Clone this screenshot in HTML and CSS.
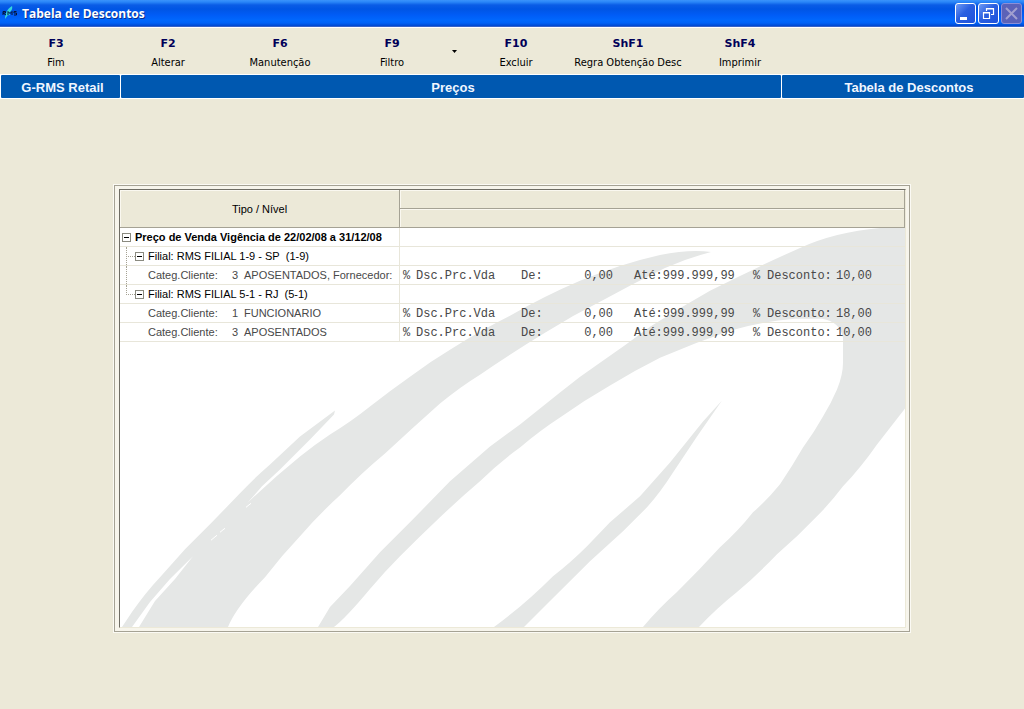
FILE: index.html
```html
<!DOCTYPE html>
<html lang="pt-BR">
<head>
<meta charset="utf-8">
<title>Tabela de Descontos</title>
<link rel="stylesheet" href="styles.css">
</head>
<body>
<header class="titlebar">
  <svg class="app-icon" viewBox="0 0 16 16" aria-hidden="true">
    <path d="M3 13C3 8 5 3 10 0C11 3 9 5 7 7C9 8 8 10 6 9C5 10 4 12 3 13Z" fill="#35d6dc"/>
    <path d="M1 9V5.500h2.500v1.500H1l3 2M6 9V5.500l2 2 2-2V9M14.500 5.500H12v1.500h2.500v2H12" fill="none" stroke="#04143a"/>
  </svg>
  <h1 class="title">Tabela de Descontos</h1>
  <div class="window-controls">
    <button class="win-btn" aria-label="Minimizar"><svg viewBox="0 0 19 19"><path d="M4 13h7v3H4z" fill="#fff"/></svg></button>
    <button class="win-btn" aria-label="Restaurar"><svg viewBox="0 0 19 19"><path d="M7.500 7V4.500h7v6H12M7 5h8M4.500 8.500h6v6h-6zM4 9h7" fill="none" stroke="#fff" stroke-width="1.200"/></svg></button>
    <button class="win-btn win-close" aria-label="Fechar" disabled><svg viewBox="0 0 19 19"><path d="M4 4l11 11M15 4L4 15" stroke="#a2a0cf" stroke-width="2"/></svg></button>
  </div>
</header>
<nav class="toolbar" aria-label="Comandos">
  <button class="tool"><b class="key">F3</b><span>Fim</span></button>
  <button class="tool"><b class="key">F2</b><span>Alterar</span></button>
  <button class="tool"><b class="key">F6</b><span>Manutenção</span></button>
  <button class="tool"><b class="key">F9</b><span>Filtro</span></button>
  <button class="tool-menu" aria-label="Opções de filtro"><svg viewBox="0 0 5 3"><path d="M0 0h5L2.500 3z"/></svg></button>
  <button class="tool"><b class="key">F10</b><span>Excluir</span></button>
  <button class="tool"><b class="key">ShF1</b><span>Regra Obtenção Desc</span></button>
  <button class="tool"><b class="key">ShF4</b><span>Imprimir</span></button>
</nav>
<div class="context">
  <div class="context-cell">G-RMS Retail</div>
  <div class="context-cell">Preços</div>
  <div class="context-cell screen-name">Tabela de Descontos</div>
</div>
<main class="workspace">
  <div class="frame">
    <div class="sheet">
      <svg class="watermark" viewBox="120 228 785 400" preserveAspectRatio="none" aria-hidden="true">
        <path d="M122 628L132 613Q145 594 160 578L185 550L210 525L240 494Q255 478 270 465L300 437L335 411L334 415L310 440L280 470L262 487L247 504Q273 479 300 457Q315 445 330 435Q350 423 370 407Q390 391 410 377Q430 362 450 350Q480 331 510 316Q545 296 580 281Q620 264 660 255Q690 249 711 252Q688 258 665 268Q632 284 600 302Q572 316 545 333Q512 353 480 375Q459 388 440 404Q412 429 385 454Q361 474 340 496Q319 515 300 537Q282 556 265 578Q236 608 228 628H139L155 602L175 580L193 557L170 580L150 603L132 628Z"/>
        <path d="M318 628L330 608L350 587L380 553L410 523L450 482L490 447L520 425L560 393Q579 377 600 363Q625 346 650 327Q680 308 710 291Q755 268 800 248Q835 232 880 228H905V409L877 445Q861 468 843 487Q831 503 817 517Q798 537 777 555Q757 576 737 593Q717 609 699 628H643Q659 609 677 593Q699 571 720 548Q738 532 753 513Q767 501 780 485Q792 467 803 448Q814 433 823 417Q831 404 837 390Q843 375 843 363V338Q840 322 822 319H795Q760 322 730 331Q695 343 660 358Q634 371 610 386Q584 401 560 418Q540 431 520 448Q499 463 480 482Q460 499 440 518Q419 538 400 557Q384 573 370 590Q345 620 334 628Z"/>
        <path d="M494 628Q524 606 553 577Q570 564 587 547L610 523L640 497L670 463L703 422L722 401L697 437L673 473Q661 492 647 508L623 532L590 562L550 602L524 628Z"/>
        <path class="fleck" d="M211 541l6-5M220 533l5-4M246 508l5-4"/>
      </svg>
      <table class="grid">
        <colgroup><col class="col-level"><col></colgroup>
        <thead>
          <tr><th rowspan="2" scope="col">Tipo / Nível</th><th></th></tr>
          <tr><th></th></tr>
        </thead>
        <tbody>
          <tr><td><div class="node root"><button class="expander" aria-label="Recolher" aria-expanded="true"></button>Preço de Venda Vigência de 22/02/08 a 31/12/08</div></td><td></td></tr>
          <tr><td><div class="node branch"><button class="expander" aria-label="Recolher" aria-expanded="true"></button>Filial: RMS FILIAL 1-9 - SP&nbsp; (1-9)</div></td><td></td></tr>
          <tr><td><div class="node leaf trunk"><span>Categ.Cliente:</span><span>3</span><span>APOSENTADOS, Fornecedor:</span></div></td>
            <td><div class="rule"><span>%</span><span>Dsc.Prc.Vda</span><span>De:</span><span class="num">0,00</span><span>Até:999.999,99</span><span>%</span><span>Desconto:</span><span class="num">10,00</span></div></td></tr>
          <tr><td><div class="node branch last"><button class="expander" aria-label="Recolher" aria-expanded="true"></button>Filial: RMS FILIAL 5-1 - RJ&nbsp; (5-1)</div></td><td></td></tr>
          <tr><td><div class="node leaf"><span>Categ.Cliente:</span><span>1</span><span>FUNCIONARIO</span></div></td>
            <td><div class="rule"><span>%</span><span>Dsc.Prc.Vda</span><span>De:</span><span class="num">0,00</span><span>Até:999.999,99</span><span>%</span><span>Desconto:</span><span class="num">18,00</span></div></td></tr>
          <tr><td><div class="node leaf"><span>Categ.Cliente:</span><span>3</span><span>APOSENTADOS</span></div></td>
            <td><div class="rule"><span>%</span><span>Dsc.Prc.Vda</span><span>De:</span><span class="num">0,00</span><span>Até:999.999,99</span><span>%</span><span>Desconto:</span><span class="num">10,00</span></div></td></tr>
        </tbody>
      </table>
    </div>
  </div>
</main>
</body>
</html>
```
FILE: styles.css
```css
* { box-sizing: border-box; }

body {
  margin: 0;
  min-height: 100vh;
  display: flex;
  flex-direction: column;
  background: #ece9d8;
  color: #000;
  font: 11px/19px "Liberation Sans", Arial, sans-serif;
}

button {
  margin: 0;
  padding: 0;
  border: 0;
  background: none;
  color: inherit;
  font: inherit;
}

svg { display: block; }

/* Title bar */
.titlebar {
  height: 27px;
  display: flex;
  align-items: center;
  gap: 4px;
  padding: 0 2px;
  background: linear-gradient(#3b93fb 0, #2a86f8 2px, #0a5ce6 5px, #0055e4 9px, #005cf6 15px, #0067fd 20px, #0062f6 23px, #0046cf 26px, #6d80c0 27px);
}
.app-icon { width: 16px; height: 16px; }
.title {
  flex: 1;
  margin: 0;
  color: #fff;
  font: bold 12px/20px "Open Sans", sans-serif;
  text-shadow: 1px 1px #0b2f8c;
}
.window-controls { display: flex; gap: 2px; }
.win-btn {
  width: 21px;
  height: 21px;
  border: 1px solid #fff;
  border-radius: 3px;
  background: linear-gradient(135deg, #6f9bf5, #2a5fe0 45%, #1e52dc);
}
.win-close { border-color: #8b8fd8; background: #5b62b8; }

/* Toolbar */
.toolbar {
  display: flex;
  height: 47px;
  border-top: 1px solid #fff;
  font: 11px/19px "DejaVu Sans Condensed", "DejaVu Sans", sans-serif;
}
.tool {
  width: 112px;
  display: flex;
  flex-direction: column;
  align-items: center;
  padding-top: 6px;
}
.key { color: #000058; font: bold 11px/19px "DejaVu Sans", sans-serif; }
.tool-menu { width: 12px; display: grid; place-items: center; }
.tool-menu svg { width: 5px; height: 3px; }

/* Context bar */
.context {
  display: grid;
  grid-template-columns: 119px 1fr 242px;
  gap: 1px;
  height: 25px;
  padding: 1px 0 1px 1px;
  background: #fff;
  color: #f0f6ff;
  font: bold 13px/25px "Liberation Sans", Arial, sans-serif;
  text-align: center;
}
.context-cell {
  height: 23px;
  padding-left: 4px;
  background: #0058b0;
  border-radius: 1px;
}
.screen-name { padding-left: 12px; }

/* Workspace */
.workspace { flex: 1; display: flex; padding: 86px 114px 77px; }
.frame {
  flex: 1;
  display: flex;
  padding: 3px 3px 3px 4px;
  border: 1px solid #a5a294;
  outline: 1px solid #fbfaf4;
  background: #f7f5ec;
}
.sheet {
  flex: 1;
  position: relative;
  border: 1px solid #6f6d64;
  border-right-color: #ece9d8;
  border-bottom-color: #ece9d8;
  background: #fff;
}
.watermark {
  position: absolute;
  top: 38px;
  left: 0;
  width: 100%;
  height: calc(100% - 38px);
  fill: #e5e7e6;
}
.fleck { stroke: #fff; }

/* Tree grid */
.grid {
  position: relative;
  width: 100%;
  table-layout: fixed;
  border-collapse: separate;
  border-spacing: 0;
}
.col-level { width: 280px; }
th, td { height: 19px; padding: 0; line-height: 18px; }
th {
  border-right: 1px solid #a5a294;
  border-bottom: 1px solid #a5a294;
  background: #ece9d8;
  box-shadow: inset 1px 1px #faf8f0;
  font-weight: normal;
}
td { border-bottom: 1px solid #e8e6da; }
td:first-child { border-right: 1px solid #e8e6da; }

.node {
  position: relative;
  display: flex;
  align-items: center;
  gap: 4px;
  height: 18px;
  padding-left: 2px;
  overflow: hidden;
  white-space: nowrap;
}
.root { font-weight: bold; }
.branch { padding-left: 15px; }
.leaf {
  display: grid;
  grid-template-columns: 84px 12px 1fr;
  gap: 0;
  padding-left: 28px;
  color: #484848;
}
.branch::before, .trunk::before {
  content: "";
  position: absolute;
  top: 0;
  bottom: 0;
  left: 6px;
  border-left: 1px dotted #a5a294;
}
.branch.last::before { bottom: 8px; }
.branch::after {
  content: "";
  position: absolute;
  top: 9px;
  left: 6px;
  width: 9px;
  border-top: 1px dotted #a5a294;
}
.expander {
  width: 9px;
  height: 9px;
  border: 1px solid #8a8a80;
  background: linear-gradient(#000, #000) center / 5px 1px no-repeat #fff;
}

.rule {
  display: grid;
  grid-template-columns: 13px 105px 57px 35px 21px 98px 21px 14px 70px 35px;
  height: 18px;
  padding-left: 3px;
  color: #484848;
  font: 12px/20px "Liberation Mono", "Courier New", monospace;
  white-space: nowrap;
}
.rule span:nth-child(5) { grid-column: 6; }
.rule span:nth-child(6) { grid-column: 8; }
.num { justify-self: end; }
```
